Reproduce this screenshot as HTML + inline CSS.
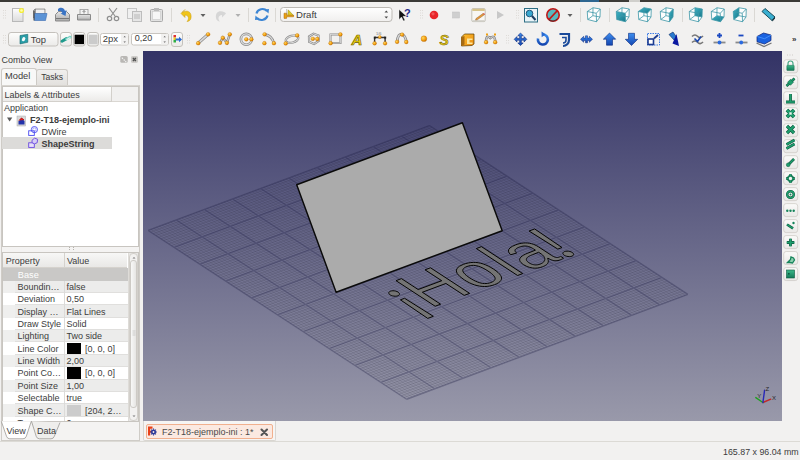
<!DOCTYPE html>
<html><head><meta charset="utf-8">
<style>
*{box-sizing:border-box}
html,body{margin:0;padding:0}
body{width:800px;height:460px;position:relative;overflow:hidden;background:#f2f1f0;font-family:"Liberation Sans",sans-serif;font-size:9px;color:#3c3c3c}
.a{position:absolute}
.t{position:absolute;white-space:nowrap;line-height:1}
.sep{position:absolute;width:1px;background:#d8d6d3;top:8px;height:14px}
.hdl{position:absolute;width:2px;height:10px;border-left:1px dotted #c0bdb9;border-right:1px dotted #c0bdb9}
.btn{position:absolute;border:1px solid #c9c6c1;border-radius:3px;background:linear-gradient(#fbfbfa,#ecebe9)}
.ic{position:absolute}
</style></head><body>
<div class="a" style="left:0;top:0;width:800px;height:2px;background:#3c3b37"></div>
<div class="a" style="left:580px;top:0;width:19px;height:1.5px;background:#2e6690"></div>
<div class="a" style="left:629px;top:0;width:11px;height:2px;background:#d0cfcc"></div>

<!-- TOOLBAR ROW 1 -->
<div id="tb1">
<svg class="a" style="left:0;top:0" width="800" height="52" viewBox="0 0 800 52">
<defs><linearGradient id="pg" x1="0" y1="0" x2="0" y2="1"><stop offset="0" stop-color="#fdfdfd"/><stop offset="1" stop-color="#dcdcdc"/></linearGradient><linearGradient id="teal" x1="0" y1="0" x2="1" y2="1"><stop offset="0" stop-color="#3fb2c6"/><stop offset="1" stop-color="#17788a"/></linearGradient><linearGradient id="blu" x1="0" y1="0" x2="0" y2="1"><stop offset="0" stop-color="#7fb0e8"/><stop offset="1" stop-color="#3a78c8"/></linearGradient><linearGradient id="gry" x1="0" y1="0" x2="0" y2="1"><stop offset="0" stop-color="#e8e8e8"/><stop offset="1" stop-color="#a8a8a8"/></linearGradient><linearGradient id="combo" x1="0" y1="0" x2="0" y2="1"><stop offset="0" stop-color="#ffffff"/><stop offset="1" stop-color="#f0efee"/></linearGradient></defs>
<rect x="3" y="10" width="1" height="1" fill="#dedbd7"/>
<rect x="5" y="10" width="1" height="1" fill="#dedbd7"/>
<rect x="3" y="12.5" width="1" height="1" fill="#dedbd7"/>
<rect x="5" y="12.5" width="1" height="1" fill="#dedbd7"/>
<rect x="3" y="15" width="1" height="1" fill="#dedbd7"/>
<rect x="5" y="15" width="1" height="1" fill="#dedbd7"/>
<rect x="3" y="17.5" width="1" height="1" fill="#dedbd7"/>
<rect x="5" y="17.5" width="1" height="1" fill="#dedbd7"/>
<rect x="12.5" y="8.5" width="10.5" height="13" fill="url(#pg)" stroke="#b8b8b8" stroke-width="1"/>
<circle cx="21.5" cy="10.5" r="2.6" fill="#f4ee3a"/><circle cx="21.5" cy="10.5" r="1.3" fill="#fffcb0"/>
<path d="M33.5 10.5l1.5-1.5h10v9h-11.5z" fill="#9a9a9a" stroke="#6a6a6a" stroke-width="0.6"/><rect x="36" y="9.5" width="8.5" height="4" fill="#f0f0f0"/>
<path d="M34.5 13.5h12.5l-1.5 7h-11z" fill="#5b93d6" stroke="#3a6cb0" stroke-width="0.6"/><path d="M34 11v9.5" stroke="#444" stroke-width="1"/>
<path d="M55.5 14.5l3-3h8l3 3v6.5h-14z" fill="url(#gry)" stroke="#8a8a8a" stroke-width="1"/>
<rect x="56" y="18" width="13" height="1" fill="#777"/>
<path d="M58 9c2-2 6-2 7 2l1.5-1-1 6-5-2.5 1.8-.6c-.6-1.8-2.8-2.4-4.3-1.4z" fill="#3a74c4"/>
<rect x="80" y="9.5" width="8" height="6" fill="#f4f4f4" stroke="#999" stroke-width="0.8"/>
<path d="M77.5 14.5h13v5.5h-13z" fill="url(#gry)" stroke="#8a8a8a" stroke-width="1"/>
<rect x="79" y="16.5" width="10" height="1" fill="#cfcfcf"/><path d="M84 10.5v3m-1.5-1.5l1.5-1.5 1.5 1.5" stroke="#777" stroke-width="0.8" fill="none"/>
<rect x="98" y="8" width="1" height="14" fill="#dad8d4"/>
<g stroke="#8f8f8f" fill="none" stroke-width="1.2"><path d="M109 8l6 8M117 8l-6 8"/><circle cx="109.5" cy="18.5" r="2.2"/><circle cx="116.5" cy="18.5" r="2.2"/></g>
<rect x="127.5" y="8.5" width="9" height="10" fill="#f0f0f0" stroke="#c6c6c6"/><rect x="132.5" y="11.5" width="9" height="10" fill="#e6e6e6" stroke="#bdbdbd"/><rect x="134" y="14" width="6" height="5" fill="#cfcfcf"/>
<rect x="150.5" y="9.5" width="12" height="12" rx="1" fill="#e2e2e2" stroke="#aaa"/><rect x="152.5" y="11.5" width="8" height="8" fill="#f6f6f6" stroke="#c8c8c8" stroke-width="0.6"/><rect x="154" y="8" width="5" height="3" fill="#bbb"/>
<rect x="171" y="8" width="1" height="14" fill="#dad8d4"/>
<path d="M182 12.5c5-3 10-1 9 5.5-0.3 2-2 3.5-4 3.5 2-2 2.5-6-2-6.5v2.5l-4-4 4-4z" fill="#f0c419" stroke="#c89a10" stroke-width="0.5"/>
<path d="M200.5 14h5l-2.5 3z" fill="#606060"/>
<path d="M225 12.5c-5-3-10-1-9 5.5 0.3 2 2 3.5 4 3.5-2-2-2.5-6 2-6.5v2.5l4-4-4-4z" fill="#d6d6d6"/>
<path d="M235.5 14h5l-2.5 3z" fill="#b0b0b0"/>
<rect x="248" y="8" width="1" height="14" fill="#dad8d4"/>
<g fill="none" stroke="#3d86d4" stroke-width="2.2"><path d="M256.5 13.5a6 5.5 0 0 1 10.5-2.5"/><path d="M267.5 15.5a6 5.5 0 0 1-10.5 2.5"/></g>
<path d="M264.5 9.5l4.5-0.5-0.5 4.5z M259.5 19.5l-4.5 0.5 0.5-4.5z" fill="#3d86d4"/>
<rect x="275" y="8" width="1" height="14" fill="#dad8d4"/>
<rect x="280.5" y="7.5" width="111.5" height="14" rx="3" fill="url(#combo)" stroke="#bdbab5"/>
<rect x="286.2" y="9" width="0.9" height="8.5" fill="#c0c0c0"/><path d="M288.2 9.8L293.6 15.6H287.8z" fill="#dcc828" stroke="#9a8a10" stroke-width="0.5"/><path d="M284 13.2h2.6v2h7v1.6h-7v1.6h-2.6z" fill="#eaa012" stroke="#a86a08" stroke-width="0.5"/>
<path d="M384.5 12.5l1.8-2 1.8 2zM384.5 16.5l1.8 2 1.8-2z" fill="#4c4c4c"/>
<path d="M399 9.5v10l2.5-2.5 2 4 1.5-0.7-2-4h3.5z" fill="#111" stroke="#fff" stroke-width="0.4"/>
<text x="404" y="17" font-family="Liberation Sans" font-weight="bold" font-size="11" fill="#1e2a88">?</text>
<rect x="420" y="10" width="1" height="1" fill="#dedbd7"/>
<rect x="422" y="10" width="1" height="1" fill="#dedbd7"/>
<rect x="420" y="12.5" width="1" height="1" fill="#dedbd7"/>
<rect x="422" y="12.5" width="1" height="1" fill="#dedbd7"/>
<rect x="420" y="15" width="1" height="1" fill="#dedbd7"/>
<rect x="422" y="15" width="1" height="1" fill="#dedbd7"/>
<rect x="420" y="17.5" width="1" height="1" fill="#dedbd7"/>
<rect x="422" y="17.5" width="1" height="1" fill="#dedbd7"/>
<circle cx="434" cy="15" r="4.3" fill="#e8262a"/><circle cx="433" cy="13.8" r="1.6" fill="#f46a6a" opacity="0.7"/>
<rect x="452.5" y="12" width="7" height="6" fill="#cfcfcf" stroke="#c0c0c0" stroke-width="0.5"/>
<rect x="471.8" y="8.6" width="13.4" height="13" rx="1.2" fill="#f8f7f3" stroke="#b8b4aa" stroke-width="0.8"/><rect x="472.3" y="8.8" width="12.4" height="2.2" fill="#d6c48a"/><rect x="472.3" y="20" width="12.4" height="1.4" fill="#d8d6d0"/><path d="M476 18.5l7-5 1.3 1.3-7 5-1.8.3z" fill="#e89a3a" stroke="#7a5020" stroke-width="0.4"/><path d="M483 13.5l1.3 1.3 .8-.6-1.3-1.3z" fill="#d83a3a"/>
<path d="M497 11v8l7-4z" fill="#c8c8c8"/>
<rect x="516" y="10" width="1" height="1" fill="#dedbd7"/>
<rect x="518" y="10" width="1" height="1" fill="#dedbd7"/>
<rect x="516" y="12.5" width="1" height="1" fill="#dedbd7"/>
<rect x="518" y="12.5" width="1" height="1" fill="#dedbd7"/>
<rect x="516" y="15" width="1" height="1" fill="#dedbd7"/>
<rect x="518" y="15" width="1" height="1" fill="#dedbd7"/>
<rect x="516" y="17.5" width="1" height="1" fill="#dedbd7"/>
<rect x="518" y="17.5" width="1" height="1" fill="#dedbd7"/>
<rect x="524.5" y="8.5" width="13" height="13.5" fill="#eaf4f8" stroke="#2c6e84" stroke-width="1"/><circle cx="529.5" cy="13.5" r="3.3" fill="#39a8d0" stroke="#1c4c70" stroke-width="0.9"/><path d="M532 16l3.5 4" stroke="#1c3d60" stroke-width="2"/>
<circle cx="553" cy="15" r="6.2" fill="#58b8c0" stroke="#c01818" stroke-width="1.6"/><path d="M549 19.5l8.5-9" stroke="#c01818" stroke-width="1.8"/><path d="M549 20a6 6 0 0 0 8 -1" stroke="#333" stroke-width="0.8" fill="none"/>
<path d="M567.5 14h5l-2.5 3z" fill="#606060"/>
<rect x="580" y="8" width="1" height="14" fill="#dad8d4"/>
<g transform="translate(587,7.5)">
<path d="M0.25 4L6 0.25L13.25 1.5L13 9.5L9.5 14.25L0.75 12z" fill="#ffffff" fill-opacity="0.85"/>
<path d="M0.25 4L9.25 5.75M9.25 5.75L9.5 14.25M9.5 14.25L0.75 12M0.75 12L0.25 4M6 0.25L13.25 1.5M13.25 1.5L13 9.5M13 9.5L5.9 8.2M5.9 8.2L6 0.25M0.25 4L6 0.25M9.25 5.75L13.25 1.5M9.5 14.25L13 9.5M0.75 12L5.9 8.2" fill="none" stroke="#3f98a8" stroke-width="0.9" stroke-opacity="0.9"/>
</g>
<rect x="609" y="8" width="1" height="14" fill="#dad8d4"/>
<g transform="translate(616,7.5)">
<path d="M0.25 4L6 0.25L13.25 1.5L13 9.5L9.5 14.25L0.75 12z" fill="#ffffff" fill-opacity="0.85"/>
<path d="M0.25 4L9.25 5.75L9.5 14.25L0.75 12z" fill="url(#teal)"/>
<path d="M0.25 4L9.25 5.75M9.25 5.75L9.5 14.25M9.5 14.25L0.75 12M0.75 12L0.25 4M6 0.25L13.25 1.5M13.25 1.5L13 9.5M13 9.5L5.9 8.2M5.9 8.2L6 0.25M0.25 4L6 0.25M9.25 5.75L13.25 1.5M9.5 14.25L13 9.5M0.75 12L5.9 8.2" fill="none" stroke="#3f98a8" stroke-width="0.9" stroke-opacity="0.9"/>
</g>
<g transform="translate(638,7.5)">
<path d="M0.25 4L6 0.25L13.25 1.5L13 9.5L9.5 14.25L0.75 12z" fill="#ffffff" fill-opacity="0.85"/>
<path d="M0.25 4L6 0.25L13.25 1.5L9.25 5.75z" fill="url(#teal)"/>
<path d="M0.25 4L9.25 5.75M9.25 5.75L9.5 14.25M9.5 14.25L0.75 12M0.75 12L0.25 4M6 0.25L13.25 1.5M13.25 1.5L13 9.5M13 9.5L5.9 8.2M5.9 8.2L6 0.25M0.25 4L6 0.25M9.25 5.75L13.25 1.5M9.5 14.25L13 9.5M0.75 12L5.9 8.2" fill="none" stroke="#3f98a8" stroke-width="0.9" stroke-opacity="0.9"/>
</g>
<g transform="translate(660,7.5)">
<path d="M0.25 4L6 0.25L13.25 1.5L13 9.5L9.5 14.25L0.75 12z" fill="#ffffff" fill-opacity="0.85"/>
<path d="M9.25 5.75L13.25 1.5L13 9.5L9.5 14.25z" fill="url(#teal)"/>
<path d="M0.25 4L9.25 5.75M9.25 5.75L9.5 14.25M9.5 14.25L0.75 12M0.75 12L0.25 4M6 0.25L13.25 1.5M13.25 1.5L13 9.5M13 9.5L5.9 8.2M5.9 8.2L6 0.25M0.25 4L6 0.25M9.25 5.75L13.25 1.5M9.5 14.25L13 9.5M0.75 12L5.9 8.2" fill="none" stroke="#3f98a8" stroke-width="0.9" stroke-opacity="0.9"/>
</g>
<rect x="682" y="8" width="1" height="14" fill="#dad8d4"/>
<g transform="translate(689,7.5)">
<path d="M0.25 4L6 0.25L13.25 1.5L13 9.5L9.5 14.25L0.75 12z" fill="#ffffff" fill-opacity="0.85"/>
<path d="M6 0.25L13.25 1.5L13 9.5L5.9 8.2z" fill="url(#teal)"/>
<path d="M0.25 4L9.25 5.75M9.25 5.75L9.5 14.25M9.5 14.25L0.75 12M0.75 12L0.25 4M6 0.25L13.25 1.5M13.25 1.5L13 9.5M13 9.5L5.9 8.2M5.9 8.2L6 0.25M0.25 4L6 0.25M9.25 5.75L13.25 1.5M9.5 14.25L13 9.5M0.75 12L5.9 8.2" fill="none" stroke="#3f98a8" stroke-width="0.9" stroke-opacity="0.9"/>
</g>
<g transform="translate(711,7.5)">
<path d="M0.25 4L6 0.25L13.25 1.5L13 9.5L9.5 14.25L0.75 12z" fill="#ffffff" fill-opacity="0.85"/>
<path d="M0.75 12L5.9 8.2L13 9.5L9.5 14.25z" fill="url(#teal)"/>
<path d="M0.25 4L9.25 5.75M9.25 5.75L9.5 14.25M9.5 14.25L0.75 12M0.75 12L0.25 4M6 0.25L13.25 1.5M13.25 1.5L13 9.5M13 9.5L5.9 8.2M5.9 8.2L6 0.25M0.25 4L6 0.25M9.25 5.75L13.25 1.5M9.5 14.25L13 9.5M0.75 12L5.9 8.2" fill="none" stroke="#3f98a8" stroke-width="0.9" stroke-opacity="0.9"/>
</g>
<g transform="translate(733,7.5)">
<path d="M0.25 4L6 0.25L13.25 1.5L13 9.5L9.5 14.25L0.75 12z" fill="#ffffff" fill-opacity="0.85"/>
<path d="M0.25 4L6 0.25L5.9 8.2L0.75 12z" fill="url(#teal)"/>
<path d="M0.25 4L9.25 5.75M9.25 5.75L9.5 14.25M9.5 14.25L0.75 12M0.75 12L0.25 4M6 0.25L13.25 1.5M13.25 1.5L13 9.5M13 9.5L5.9 8.2M5.9 8.2L6 0.25M0.25 4L6 0.25M9.25 5.75L13.25 1.5M9.5 14.25L13 9.5M0.75 12L5.9 8.2" fill="none" stroke="#3f98a8" stroke-width="0.9" stroke-opacity="0.9"/>
</g>
<rect x="754" y="8" width="1" height="14" fill="#dad8d4"/>
<path d="M762 11.5l3-3 10 8.5-3 3.5z" fill="#3aaed0" stroke="#1a4c5a" stroke-width="1"/><path d="M772 20l3-3.5v2l-2.5 3z" fill="#1e3a44"/>
</svg>
</div>
<!-- TOOLBAR ROW 2 -->
<div id="tb2">
<svg class="a" style="left:0;top:27px" width="800" height="24" viewBox="0 27 800 24">
<defs><linearGradient id="bt" x1="0" y1="0" x2="0" y2="1"><stop offset="0" stop-color="#fdfdfc"/><stop offset="1" stop-color="#ebeae8"/></linearGradient><radialGradient id="dot" cx="0.35" cy="0.35" r="0.7"><stop offset="0" stop-color="#ffd860"/><stop offset="0.6" stop-color="#f4a010"/><stop offset="1" stop-color="#c87000"/></radialGradient><linearGradient id="bl" x1="0" y1="0" x2="0" y2="1"><stop offset="0" stop-color="#3d8ef0"/><stop offset="1" stop-color="#1446b0"/></linearGradient><linearGradient id="yl" x1="0" y1="0" x2="1" y2="1"><stop offset="0" stop-color="#ffc030"/><stop offset="1" stop-color="#e88a10"/></linearGradient></defs>
<rect x="3" y="35" width="1" height="1" fill="#dedbd7"/>
<rect x="5" y="35" width="1" height="1" fill="#dedbd7"/>
<rect x="3" y="37.5" width="1" height="1" fill="#dedbd7"/>
<rect x="5" y="37.5" width="1" height="1" fill="#dedbd7"/>
<rect x="3" y="40" width="1" height="1" fill="#dedbd7"/>
<rect x="5" y="40" width="1" height="1" fill="#dedbd7"/>
<rect x="3" y="42.5" width="1" height="1" fill="#dedbd7"/>
<rect x="5" y="42.5" width="1" height="1" fill="#dedbd7"/>
<rect x="8.5" y="32.5" width="49.5" height="13.5" rx="2.5" fill="url(#bt)" stroke="#c4c1bc"/>
<path d="M20 35.5l7.8-1.2v8l-7.8 1.6z" fill="#2a9ea8" stroke="#1a6a70" stroke-width="0.6"/><ellipse cx="23.6" cy="39.2" rx="1.6" ry="2.2" transform="rotate(30 23.6 39.2)" fill="#f4fbfb"/>
<rect x="60.5" y="32.5" width="11" height="13.5" rx="2.5" fill="url(#bt)" stroke="#c4c1bc"/>
<path d="M62 41.2l4.5-2.6" stroke="#1f9a8c" stroke-width="3" stroke-linecap="round"/><path d="M66.5 39.2l3.8-2.2" stroke="#7ad0c4" stroke-width="2.6" stroke-linecap="round"/><path d="M67 39.5l3-1.8" stroke="#dff6f2" stroke-width="1.2" stroke-linecap="round"/>
<rect x="73.5" y="32.5" width="11.5" height="13.5" rx="2.5" fill="url(#bt)" stroke="#c4c1bc"/><rect x="74.6" y="34.7" width="9.4" height="9.4" fill="#000"/>
<rect x="87.5" y="32.5" width="11" height="13.5" rx="2.5" fill="url(#bt)" stroke="#c4c1bc"/><rect x="88.6" y="34.7" width="9" height="9.4" fill="#cbcbcb"/>
<rect x="100.5" y="33.5" width="28" height="11.5" rx="2" fill="#fff" stroke="#c8c5c0"/>
<rect x="121" y="34" width="7" height="10.5" fill="#f2f1f0"/>
<path d="M123.5 37.3l1.2-1.3 1.2 1.3z M123.5 41.5l1.2 1.3 1.2-1.3z" fill="#5a5a5a"/>
<rect x="131.5" y="33.5" width="37" height="11.5" rx="2" fill="#fff" stroke="#c8c5c0"/>
<rect x="161" y="34" width="7" height="10.5" fill="#f2f1f0"/>
<path d="M163.5 37.3l1.2-1.3 1.2 1.3z M163.5 41.5l1.2 1.3 1.2-1.3z" fill="#5a5a5a"/>
<rect x="171.5" y="32.5" width="11" height="14" rx="2.5" fill="url(#bt)" stroke="#c4c1bc"/>
<rect x="173.5" y="35" width="2.5" height="2.5" fill="#e03030"/><rect x="173.5" y="37.5" width="2.5" height="2.5" fill="#f0d020"/><rect x="173.5" y="40" width="2.5" height="2.5" fill="#30b040"/>
<path d="M175.5 38.5h3.5v-1.8l3 2.8-3 2.8v-1.8h-3.5z" fill="#2a6ad0"/>
<rect x="187" y="35" width="1" height="1" fill="#dedbd7"/>
<rect x="189" y="35" width="1" height="1" fill="#dedbd7"/>
<rect x="187" y="37.5" width="1" height="1" fill="#dedbd7"/>
<rect x="189" y="37.5" width="1" height="1" fill="#dedbd7"/>
<rect x="187" y="40" width="1" height="1" fill="#dedbd7"/>
<rect x="189" y="40" width="1" height="1" fill="#dedbd7"/>
<rect x="187" y="42.5" width="1" height="1" fill="#dedbd7"/>
<rect x="189" y="42.5" width="1" height="1" fill="#dedbd7"/>
<path d="M198.2 43.2L208.1 34.3" fill="none" stroke="#8a8a8a" stroke-width="3.1"/><path d="M198.2 43.2L208.1 34.3" fill="none" stroke="#d8d8d8" stroke-width="1.6"/>
<circle cx="198.2" cy="43.2" r="1.9" fill="url(#dot)" stroke="#b86a00" stroke-width="0.3"/>
<circle cx="208.1" cy="34.3" r="1.9" fill="url(#dot)" stroke="#b86a00" stroke-width="0.3"/>
<path d="M220 42.8L222.8 37.8L226.9 42.8L229.8 34.3" fill="none" stroke="#8a8a8a" stroke-width="2.5"/><path d="M220 42.8L222.8 37.8L226.9 42.8L229.8 34.3" fill="none" stroke="#d8d8d8" stroke-width="1"/>
<circle cx="220" cy="42.8" r="1.9" fill="url(#dot)" stroke="#b86a00" stroke-width="0.3"/>
<circle cx="222.8" cy="37.8" r="1.9" fill="url(#dot)" stroke="#b86a00" stroke-width="0.3"/>
<circle cx="226.9" cy="42.8" r="1.9" fill="url(#dot)" stroke="#b86a00" stroke-width="0.3"/>
<circle cx="229.8" cy="34.3" r="1.9" fill="url(#dot)" stroke="#b86a00" stroke-width="0.3"/>
<circle cx="246.3" cy="39.3" r="5.4" fill="none" stroke="#8a8a8a" stroke-width="2.6"/><circle cx="246.3" cy="39.3" r="5.4" fill="none" stroke="#dcdcdc" stroke-width="1.2"/>
<circle cx="246.3" cy="39.3" r="1.9" fill="url(#dot)" stroke="#b86a00" stroke-width="0.3"/>
<circle cx="251.4" cy="39.3" r="1.9" fill="url(#dot)" stroke="#b86a00" stroke-width="0.3"/>
<path d="M264.6 34.3Q272 35.5 273.9 43.2" fill="none" stroke="#8a8a8a" stroke-width="2.7"/><path d="M264.6 34.3Q272 35.5 273.9 43.2" fill="none" stroke="#d8d8d8" stroke-width="1.2"/>
<circle cx="264.6" cy="34.3" r="1.9" fill="url(#dot)" stroke="#b86a00" stroke-width="0.3"/>
<circle cx="264.4" cy="43.2" r="1.9" fill="url(#dot)" stroke="#b86a00" stroke-width="0.3"/>
<circle cx="273.9" cy="43.2" r="1.9" fill="url(#dot)" stroke="#b86a00" stroke-width="0.3"/>
<ellipse cx="292" cy="39.2" rx="6.5" ry="3.4" transform="rotate(-15 292 39.2)" fill="none" stroke="#8a8a8a" stroke-width="2.2"/><ellipse cx="292" cy="39.2" rx="6.5" ry="3.4" transform="rotate(-15 292 39.2)" fill="none" stroke="#dcdcdc" stroke-width="1"/>
<circle cx="285.7" cy="43.4" r="1.9" fill="url(#dot)" stroke="#b86a00" stroke-width="0.3"/>
<circle cx="297.2" cy="35.4" r="1.9" fill="url(#dot)" stroke="#b86a00" stroke-width="0.3"/>
<path d="M309 36.5l4.5-2.8 5 1.8.2 5.5-4.6 3-5 -2.2z" fill="none" stroke="#8a8a8a" stroke-width="2.2"/><path d="M309 36.5l4.5-2.8 5 1.8.2 5.5-4.6 3-5 -2.2z" fill="none" stroke="#dcdcdc" stroke-width="1"/>
<circle cx="312.8" cy="38.8" r="1.9" fill="url(#dot)" stroke="#b86a00" stroke-width="0.3"/>
<circle cx="317.3" cy="39" r="1.9" fill="url(#dot)" stroke="#b86a00" stroke-width="0.3"/>
<rect x="330.5" y="34.5" width="10" height="8.5" fill="none" stroke="#8a8a8a" stroke-width="2"/><rect x="330.5" y="34.5" width="10" height="8.5" fill="none" stroke="#dcdcdc" stroke-width="0.8"/>
<circle cx="330.6" cy="43.2" r="1.9" fill="url(#dot)" stroke="#b86a00" stroke-width="0.3"/>
<circle cx="340.4" cy="34.4" r="1.9" fill="url(#dot)" stroke="#b86a00" stroke-width="0.3"/>
<text x="351.5" y="45" font-family="Liberation Sans" font-weight="bold" font-style="italic" font-size="15" fill="#f2d20a" stroke="#6a5a00" stroke-width="0.6">A</text>
<path d="M374.6 37.5h10.5M374.6 37.5v5.8M385.1 37.5v5.8" stroke="#333" stroke-width="1.4" fill="none"/><text x="376" y="35" font-size="4" fill="#777" font-family="Liberation Sans">1/6</text>
<circle cx="374.6" cy="43.3" r="1.9" fill="url(#dot)" stroke="#b86a00" stroke-width="0.3"/>
<circle cx="385.1" cy="43.3" r="1.9" fill="url(#dot)" stroke="#b86a00" stroke-width="0.3"/>
<circle cx="379.8" cy="37.1" r="1.6" fill="url(#dot)" stroke="#b86a00" stroke-width="0.3"/>
<rect x="373.8" y="36.6" width="2" height="2" fill="#222"/><rect x="384.2" y="36.6" width="2" height="2" fill="#222"/>
<path d="M397.1 41.8Q398 33 402 34.5Q405.5 35.5 406.3 42" fill="none" stroke="#8a8a8a" stroke-width="2.7"/><path d="M397.1 41.8Q398 33 402 34.5Q405.5 35.5 406.3 42" fill="none" stroke="#d8d8d8" stroke-width="1.2"/>
<circle cx="397.1" cy="41.8" r="1.9" fill="url(#dot)" stroke="#b86a00" stroke-width="0.3"/>
<circle cx="402.1" cy="34.6" r="1.9" fill="url(#dot)" stroke="#b86a00" stroke-width="0.3"/>
<circle cx="406.3" cy="42" r="1.9" fill="url(#dot)" stroke="#b86a00" stroke-width="0.3"/>
<circle cx="423.9" cy="38.7" r="2.9" fill="url(#dot)" stroke="#b86a00" stroke-width="0.3"/>
<text x="439.5" y="45" font-family="Liberation Sans" font-weight="bold" font-style="italic" font-size="14" fill="#e8c818" stroke="#6a5a00" stroke-width="0.5">S</text>
<path d="M461.5 37l3-3h9.5v10l-2 1.5-10.5 .5z" fill="url(#yl)" stroke="#5a3a00" stroke-width="0.7"/><path d="M467 38.5h5.5v1.5h-3v2.5h3v1.5h-5.5z" fill="#fbe6a0"/><path d="M461.5 37v9l3-1.5v-8.5z" fill="#a86a10"/>
<path d="M486 42Q486 34 490.3 38Q495 34 495.2 42" fill="none" stroke="#8a8a8a" stroke-width="2.5"/><path d="M486 42Q486 34 490.3 38Q495 34 495.2 42" fill="none" stroke="#d8d8d8" stroke-width="1"/>
<circle cx="486.1" cy="42.2" r="1.9" fill="url(#dot)" stroke="#b86a00" stroke-width="0.3"/>
<circle cx="495.2" cy="42.2" r="1.9" fill="url(#dot)" stroke="#b86a00" stroke-width="0.3"/>
<rect x="486" y="33.5" width="2" height="2" fill="#f0a010"/><rect x="494" y="33.5" width="2" height="2" fill="#f0a010"/>
<rect x="506" y="35" width="1" height="1" fill="#dedbd7"/>
<rect x="508" y="35" width="1" height="1" fill="#dedbd7"/>
<rect x="506" y="37.5" width="1" height="1" fill="#dedbd7"/>
<rect x="508" y="37.5" width="1" height="1" fill="#dedbd7"/>
<rect x="506" y="40" width="1" height="1" fill="#dedbd7"/>
<rect x="508" y="40" width="1" height="1" fill="#dedbd7"/>
<rect x="506" y="42.5" width="1" height="1" fill="#dedbd7"/>
<rect x="508" y="42.5" width="1" height="1" fill="#dedbd7"/>
<path d="M520.50 33.00L523.20 35.70L521.35 35.70L521.35 38.45L524.10 38.45L524.10 36.60L526.80 39.30L524.10 42.00L524.10 40.15L521.35 40.15L521.35 42.90L523.20 42.90L520.50 45.60L517.80 42.90L519.65 42.90L519.65 40.15L516.90 40.15L516.90 42.00L514.20 39.30L516.90 36.60L516.90 38.45L519.65 38.45L519.65 35.70L517.80 35.70z" fill="url(#bl)" stroke="#0c2a80" stroke-width="0.6"/>
<path d="M538 38.5a5 5 0 1 0 5-4" fill="none" stroke="url(#bl)" stroke-width="2.6"/><path d="M541.5 31.5l4 2.8-3.8 3z" fill="#2a6ad0"/>
<path d="M559.5 34h9.5v6a6 6 0 0 1-6 6" fill="none" stroke="#1a4a9a" stroke-width="2.2"/><path d="M562 37.5h4v2.5a3 3 0 0 1-3 3" fill="none" stroke="#1a4a9a" stroke-width="1.6"/>
<path d="M580.5 39.3l3.2-3v1.8h1.8v-2.3h2v2.3h1.8v-1.8l3.2 3-3.2 3v-1.8h-1.8v2.3h-2v-2.3h-1.8v1.8z" fill="url(#bl)" stroke="#0c2a80" stroke-width="0.5"/>
<path d="M609.5 33l6.2 6.2h-3.2v6h-6v-6h-3.2z" fill="url(#bl)" stroke="#0a2a80" stroke-width="0.6"/>
<path d="M631.5 45.5l6.2-6.2h-3.2v-6h-6v6h-3.2z" fill="url(#bl)" stroke="#0a2a80" stroke-width="0.6"/>
<rect x="647.5" y="33.5" width="12" height="11.5" fill="none" stroke="#3a7ae8" stroke-width="1" stroke-dasharray="1.5 1"/><rect x="648" y="39" width="5.5" height="5.5" fill="#fff" stroke="#1a3a90" stroke-width="1.6"/><path d="M654 38.5l4-3.5" stroke="#1a3a90" stroke-width="1.8"/>
<path d="M669 34.5l4-2.5 3.5 5-2.5 3z" fill="#2a7ad0" stroke="#0a2a60" stroke-width="0.6"/><path d="M676.5 34l-4 9.5 6.5 2.5z" fill="#0a18a0"/>
<path d="M692 36.5q3-3 5.5-.2t5.5-.3 M692 42.5q3-3 5.5-.2t5.5-.3" fill="none" stroke="#777" stroke-width="1.6"/><path d="M694.5 38.5l3 3 3.5-5" fill="none" stroke="#1a48b0" stroke-width="1.6"/>
<path d="M713.5 42.5h12" stroke="#8a8a8a" stroke-width="1.8"/><circle cx="719.5" cy="42.5" r="1.9" fill="#2a6ae0"/><path d="M717 35.5h5M719.5 33v5" stroke="#1a48c0" stroke-width="1.8"/>
<path d="M735.5 42.5h12" stroke="#8a8a8a" stroke-width="1.8"/><circle cx="741.2" cy="42.5" r="1.9" fill="#2a6ae0"/><path d="M738.5 35.5h5" stroke="#1a48c0" stroke-width="1.8"/>
<path d="M756.5 43l7.5 3.5 7.5-3.5" fill="none" stroke="#777" stroke-width="1.3"/><path d="M757 36.5l6.5-3.5 7.5 2v5.5l-6.5 3.5-7.5-2.2z" fill="#1a62e0" stroke="#0a1e70" stroke-width="0.7"/><path d="M757 36.5l7.5 2.2 6.5-3.5" fill="none" stroke="#4a98ff" stroke-width="0.8"/>
<text x="792" y="41.5" font-family="Liberation Sans" font-weight="bold" font-size="8" fill="#333">»</text>
</svg>
<div class="t" style="left:30.8px;top:34.6px;font-size:9.4px;color:#3c3c3c">Top</div>
<div class="t" style="left:102.7px;top:34.1px;font-size:9.5px;color:#3c3c3c">2px</div>
<div class="t" style="left:134.7px;top:34.1px;font-size:9px;color:#3c3c3c">0,20</div>
<div class="t" style="left:296px;top:9.9px;font-size:9.6px;color:#3c3c3c">Draft</div>
</div>

<!-- COMBO VIEW -->
<div class="t" style="left:1.5px;top:56px">Combo View</div>
<svg class="a" style="left:119px;top:55px" width="20" height="9" viewBox="119 55 20 9">
<rect x="120.3" y="56" width="7.4" height="6.8" rx="1.5" fill="#b9b7b4"/>
<rect x="131.1" y="56" width="6.7" height="6.8" rx="1.5" fill="#bdbbb8"/>
<path d="M121.8 57.6l1.2 1.2M123.7 59.5l1 1M125.3 61.1l.9.9" stroke="#f4f4f4" stroke-width="1.1"/>
<rect x="131.9" y="56.8" width="5.1" height="5.2" fill="none" stroke="#dddbd8" stroke-width="0.6"/>
<path d="M132.9 58l3 3M135.9 58l-3 3" stroke="#505050" stroke-width="1.2"/>
</svg>
<!-- tabs -->
<div class="a" style="left:36px;top:69px;width:32px;height:17px;border:1px solid #cdcac5;border-bottom:none;border-radius:3px 3px 0 0;background:linear-gradient(#f0efed,#e2e0dd)"></div>
<div class="a" style="left:1px;top:67.5px;width:36px;height:19px;border:1px solid #cdcac5;border-bottom:none;border-radius:3px 3px 0 0;background:#f8f8f7"></div>
<div class="t" style="left:5px;top:72.3px;font-size:9.3px">Model</div>
<div class="t" style="left:41.2px;top:73px;font-size:8.6px">Tasks</div>
<!-- tab pane frame -->
<div class="a" style="left:1px;top:85px;width:139px;height:356px;border:1px solid #cfccc7;border-top-color:#d8d5d0;background:#f4f3f2"></div>
<!-- tree view -->
<div class="a" style="left:2px;top:86px;width:137px;height:161px;border:1px solid #c8c5c0;background:#fff"></div>
<div class="a" style="left:3px;top:87px;width:108.5px;height:14.5px;background:linear-gradient(#ffffff,#ecebe9);border-right:1px solid #d3d0cb;border-bottom:1px solid #d3d0cb"></div>
<div class="a" style="left:111.5px;top:87px;width:26.5px;height:14.5px;background:#f1f0ef;border-bottom:1px solid #dad7d2"></div>
<div class="t" style="left:4.6px;top:90.5px">Labels &amp; Attributes</div>
<div class="t" style="left:4px;top:104px">Application</div>
<svg class="a" style="left:0;top:100px" width="140" height="52" viewBox="0 100 140 52">
<path d="M7 117.5h5.3l-2.65 4z" fill="#5a5a5a"/>
<rect x="17" y="116" width="8.5" height="10" fill="#d8d8d8" stroke="#aaa" stroke-width="0.5"/>
<path d="M18.5 121.5l3-3 3 2.5v3.5h-6z" fill="#2233aa"/><path d="M19 120.5l2.5-2.5 2.5 2" fill="#dd2020" stroke="#bb1010" stroke-width="1"/>
</svg>
<div class="a" style="left:2px;top:137px;width:109.5px;height:12px;background:#dcdbd9"></div>
<svg class="a" style="left:26px;top:124px" width="14" height="26" viewBox="26 124 14 26">
<rect x="28.7" y="130.8" width="5.6" height="4.6" fill="#fff" stroke="#4848f0" stroke-width="0.9"/>
<circle cx="34.4" cy="129.6" r="3.1" fill="none" stroke="#4848f0" stroke-width="0.9"/>
<circle cx="34.4" cy="129.6" r="1.7" fill="none" stroke="#7a7af4" stroke-width="0.6"/>
<rect x="28.7" y="142.8" width="5.6" height="4.6" fill="#e6e0f8" stroke="#6a48e0" stroke-width="0.9"/>
<path d="M32 140.3l2.6-2.2 3 1.2-.4 3.4-2.8 1.2-2.4-1.4z" fill="#d6cdf6" stroke="#6a48e0" stroke-width="0.9"/>
</svg>
<div class="t" style="left:30px;top:116px;font-weight:bold">F2-T18-ejemplo-ini</div>
<div class="t" style="left:41.5px;top:128px">DWire</div>
<div class="t" style="left:41.5px;top:139.5px;font-weight:bold">ShapeString</div>
<!-- splitter dots -->
<div class="a" style="left:69px;top:247px;width:5px;height:3px;border-left:1px dotted #b5b2ad;border-right:1px dotted #b5b2ad"></div>
<!-- property view -->
<div class="a" style="left:2px;top:252px;width:137px;height:170px;border:1px solid #c8c5c0;background:#fff"></div>
<div class="a" style="left:3px;top:253px;width:124px;height:15px;background:linear-gradient(#f7f7f6,#e9e8e6);border-bottom:1px solid #d5d2cd"></div>
<div class="a" style="left:64px;top:253px;width:1px;height:15px;background:#d5d2cd"></div>
<div class="t" style="left:5.8px;top:257px">Property</div>
<div class="t" style="left:67px;top:257px">Value</div>
<div class="a" style="left:0;top:0;width:140px;height:421px;overflow:hidden">
<div class="a" style="left:3px;top:268px;width:125px;height:12.5px;background:#c9c8c6"></div>
<div class="t" style="left:17.8px;top:270.5px;color:#fff;font-size:9.2px">Base</div>
<div class="a" style="left:15px;top:280.50px;width:113px;height:12.39px;background:#ececeb;border-bottom:1px solid #e0dfdd"></div>
<div class="a" style="left:3px;top:280.50px;width:12px;height:12.39px;background:#efefee"></div>
<div class="a" style="left:64px;top:280.50px;width:1px;height:12.38px;background:#dcdbd9"></div>
<div class="t" style="left:17.5px;top:282.80px">Boundin…</div>
<div class="t" style="left:66.5px;top:282.80px">false</div>
<div class="a" style="left:15px;top:292.88px;width:113px;height:12.39px;background:#ffffff;border-bottom:1px solid #e0dfdd"></div>
<div class="a" style="left:3px;top:292.88px;width:12px;height:12.39px;background:#ffffff"></div>
<div class="a" style="left:64px;top:292.88px;width:1px;height:12.38px;background:#dcdbd9"></div>
<div class="t" style="left:17.5px;top:295.18px">Deviation</div>
<div class="t" style="left:66.5px;top:295.18px">0,50</div>
<div class="a" style="left:15px;top:305.26px;width:113px;height:12.39px;background:#ececeb;border-bottom:1px solid #e0dfdd"></div>
<div class="a" style="left:3px;top:305.26px;width:12px;height:12.39px;background:#efefee"></div>
<div class="a" style="left:64px;top:305.26px;width:1px;height:12.38px;background:#dcdbd9"></div>
<div class="t" style="left:17.5px;top:307.56px">Display …</div>
<div class="t" style="left:66.5px;top:307.56px">Flat Lines</div>
<div class="a" style="left:15px;top:317.64px;width:113px;height:12.39px;background:#ffffff;border-bottom:1px solid #e0dfdd"></div>
<div class="a" style="left:3px;top:317.64px;width:12px;height:12.39px;background:#ffffff"></div>
<div class="a" style="left:64px;top:317.64px;width:1px;height:12.38px;background:#dcdbd9"></div>
<div class="t" style="left:17.5px;top:319.94px">Draw Style</div>
<div class="t" style="left:66.5px;top:319.94px">Solid</div>
<div class="a" style="left:15px;top:330.02px;width:113px;height:12.39px;background:#ececeb;border-bottom:1px solid #e0dfdd"></div>
<div class="a" style="left:3px;top:330.02px;width:12px;height:12.39px;background:#efefee"></div>
<div class="a" style="left:64px;top:330.02px;width:1px;height:12.38px;background:#dcdbd9"></div>
<div class="t" style="left:17.5px;top:332.32px">Lighting</div>
<div class="t" style="left:66.5px;top:332.32px">Two side</div>
<div class="a" style="left:15px;top:342.40px;width:113px;height:12.39px;background:#ffffff;border-bottom:1px solid #e0dfdd"></div>
<div class="a" style="left:3px;top:342.40px;width:12px;height:12.39px;background:#ffffff"></div>
<div class="a" style="left:64px;top:342.40px;width:1px;height:12.38px;background:#dcdbd9"></div>
<div class="t" style="left:17.5px;top:344.70px">Line Color</div>
<div class="a" style="left:66.6px;top:342.70px;width:14.6px;height:11.8px;background:#000"></div>
<div class="t" style="left:85px;top:344.70px">[0, 0, 0]</div>
<div class="a" style="left:15px;top:354.78px;width:113px;height:12.39px;background:#ececeb;border-bottom:1px solid #e0dfdd"></div>
<div class="a" style="left:3px;top:354.78px;width:12px;height:12.39px;background:#efefee"></div>
<div class="a" style="left:64px;top:354.78px;width:1px;height:12.38px;background:#dcdbd9"></div>
<div class="t" style="left:17.5px;top:357.08px">Line Width</div>
<div class="t" style="left:66.5px;top:357.08px">2,00</div>
<div class="a" style="left:15px;top:367.16px;width:113px;height:12.39px;background:#ffffff;border-bottom:1px solid #e0dfdd"></div>
<div class="a" style="left:3px;top:367.16px;width:12px;height:12.39px;background:#ffffff"></div>
<div class="a" style="left:64px;top:367.16px;width:1px;height:12.38px;background:#dcdbd9"></div>
<div class="t" style="left:17.5px;top:369.46px">Point Co…</div>
<div class="a" style="left:66.6px;top:367.46px;width:14.6px;height:11.8px;background:#000"></div>
<div class="t" style="left:85px;top:369.46px">[0, 0, 0]</div>
<div class="a" style="left:15px;top:379.54px;width:113px;height:12.39px;background:#ececeb;border-bottom:1px solid #e0dfdd"></div>
<div class="a" style="left:3px;top:379.54px;width:12px;height:12.39px;background:#efefee"></div>
<div class="a" style="left:64px;top:379.54px;width:1px;height:12.38px;background:#dcdbd9"></div>
<div class="t" style="left:17.5px;top:381.84px">Point Size</div>
<div class="t" style="left:66.5px;top:381.84px">1,00</div>
<div class="a" style="left:15px;top:391.92px;width:113px;height:12.39px;background:#ffffff;border-bottom:1px solid #e0dfdd"></div>
<div class="a" style="left:3px;top:391.92px;width:12px;height:12.39px;background:#ffffff"></div>
<div class="a" style="left:64px;top:391.92px;width:1px;height:12.38px;background:#dcdbd9"></div>
<div class="t" style="left:17.5px;top:394.22px">Selectable</div>
<div class="t" style="left:66.5px;top:394.22px">true</div>
<div class="a" style="left:15px;top:404.30px;width:113px;height:12.39px;background:#ececeb;border-bottom:1px solid #e0dfdd"></div>
<div class="a" style="left:3px;top:404.30px;width:12px;height:12.39px;background:#efefee"></div>
<div class="a" style="left:64px;top:404.30px;width:1px;height:12.38px;background:#dcdbd9"></div>
<div class="t" style="left:17.5px;top:406.60px">Shape C…</div>
<div class="a" style="left:66.6px;top:404.60px;width:14.6px;height:11.8px;background:#cccccc"></div>
<div class="t" style="left:85px;top:406.60px">[204, 2…</div>
<div class="a" style="left:15px;top:416.68px;width:113px;height:12.39px;background:#ffffff;border-bottom:1px solid #e0dfdd"></div>
<div class="a" style="left:3px;top:416.68px;width:12px;height:12.39px;background:#ffffff"></div>
<div class="a" style="left:64px;top:416.68px;width:1px;height:12.38px;background:#dcdbd9"></div>
<div class="t" style="left:17.5px;top:418.98px">T…</div>
<div class="t" style="left:66.5px;top:418.98px">0</div>
</div>
<!-- scrollbar -->
<div class="a" style="left:128px;top:253px;width:10px;height:168px;background:#e9e8e6;border-left:1px solid #dedcd8"></div>
<div class="a" style="left:129px;top:253px;width:9px;height:168px;border-radius:4px;background:#f2f1f0;border:1px solid #d3d0cb"></div>
<div class="a" style="left:130px;top:260px;width:7px;height:148px;border-radius:3px;background:linear-gradient(90deg,#f8f8f7,#e6e5e3);border:1px solid #cdcac5"></div>
<svg class="a" style="left:129px;top:253px" width="10" height="168" viewBox="0 0 10 168"><path d="M3.5 5.5l1.5-1.5 1.5 1.5z" fill="#777"/><path d="M3.5 162.5l1.5 1.5 1.5-1.5z" fill="#777"/><path d="M3.5 78h3M3.5 80h3M3.5 82h3" stroke="#bbb" stroke-width="0.6"/></svg>
<!-- bottom tabs View / Data -->
<svg class="a" style="left:0;top:420px" width="140" height="21" viewBox="0 420 140 21">
<path d="M31.5 421.3L36.2 436.3Q37 438.8 39.5 438.8L51 438.8Q53.5 438.8 54.3 436.3L60 422.5" fill="#efeeec" stroke="#8f8c88" stroke-width="0.7"/>
<path d="M1.3 421.3L6.5 436.3Q7.3 438.8 9.8 438.8L23 438.8Q25.5 438.8 26.3 436.3L31.3 421.3" fill="#ffffff" stroke="#8f8c88" stroke-width="0.7"/>
</svg>
<div class="t" style="left:6.5px;top:426.5px">View</div>
<div class="t" style="left:37px;top:426.5px">Data</div>


<!-- 3D VIEW -->
<svg class="a" style="left:143px;top:51px" width="639" height="370" viewBox="143 51 639 370">
<defs>
<linearGradient id="bg" x1="0" y1="0" x2="0" y2="1">
<stop offset="0" stop-color="#333366"/>
<stop offset="1" stop-color="#9999aa"/>
</linearGradient>
</defs>
<rect x="143" y="51" width="639" height="370" fill="url(#bg)"/>
<path d="M409.44 398.20L150.99 229.40M404.04 397.56L685.29 292.66M412.25 397.15L153.80 228.35M401.46 395.87L682.71 290.97M415.06 396.10L156.61 227.30M398.87 394.19L680.12 289.29M417.88 395.05L159.43 226.25M396.29 392.50L677.54 287.60M420.69 394.00L162.24 225.20M393.70 390.81L674.95 285.91M423.50 392.96L165.05 224.16M391.12 389.12L672.37 284.22M426.31 391.91L167.86 223.11M388.53 387.43L669.78 282.53M429.12 390.86L170.68 222.06M385.95 385.75L667.20 280.85M431.94 389.81L173.49 221.01M383.36 384.06L664.61 279.16M437.56 387.71L179.11 218.91M378.20 380.68L659.45 275.78M440.38 386.66L181.93 217.86M375.61 378.99L656.86 274.09M443.19 385.61L184.74 216.81M373.03 377.31L654.28 272.41M446.00 384.56L187.55 215.76M370.44 375.62L651.69 270.72M448.81 383.51L190.36 214.71M367.86 373.93L649.11 269.03M451.62 382.47L193.18 213.67M365.27 372.24L646.52 267.34M454.44 381.42L195.99 212.62M362.69 370.55L643.94 265.65M457.25 380.37L198.80 211.57M360.10 368.87L641.35 263.97M460.06 379.32L201.61 210.52M357.52 367.18L638.77 262.28M465.69 377.22L207.24 208.42M352.35 363.80L633.60 258.90M468.50 376.17L210.05 207.37M349.77 362.11L631.02 257.21M471.31 375.12L212.86 206.32M347.18 360.43L628.43 255.53M474.12 374.07L215.68 205.27M344.60 358.74L625.85 253.84M476.94 373.02L218.49 204.22M342.01 357.05L623.26 252.15M479.75 371.98L221.30 203.18M339.43 355.36L620.68 250.46M482.56 370.93L224.11 202.13M336.84 353.67L618.09 248.77M485.38 369.88L226.93 201.08M334.26 351.99L615.51 247.09M488.19 368.83L229.74 200.03M331.67 350.30L612.92 245.40M493.81 366.73L235.36 197.93M326.51 346.92L607.76 242.02M496.62 365.68L238.18 196.88M323.92 345.23L605.17 240.33M499.44 364.63L240.99 195.83M321.34 343.55L602.59 238.65M502.25 363.58L243.80 194.78M318.75 341.86L600.00 236.96M505.06 362.53L246.61 193.73M316.17 340.17L597.42 235.27M507.88 361.49L249.43 192.69M313.58 338.48L594.83 233.58M510.69 360.44L252.24 191.64M311.00 336.79L592.25 231.89M513.50 359.39L255.05 190.59M308.41 335.11L589.66 230.21M516.31 358.34L257.86 189.54M305.83 333.42L587.08 228.52M521.94 356.24L263.49 187.44M300.66 330.04L581.91 225.14M524.75 355.19L266.30 186.39M298.08 328.35L579.33 223.45M527.56 354.14L269.11 185.34M295.49 326.67L576.74 221.77M530.38 353.09L271.93 184.29M292.91 324.98L574.16 220.08M533.19 352.04L274.74 183.24M290.32 323.29L571.57 218.39M536.00 351.00L277.55 182.20M287.74 321.60L568.99 216.70M538.81 349.95L280.36 181.15M285.15 319.91L566.40 215.01M541.62 348.90L283.18 180.10M282.57 318.23L563.82 213.33M544.44 347.85L285.99 179.05M279.98 316.54L561.23 211.64M550.06 345.75L291.61 176.95M274.82 313.16L556.07 208.26M552.88 344.70L294.43 175.90M272.23 311.47L553.48 206.57M555.69 343.65L297.24 174.85M269.65 309.79L550.90 204.89M558.50 342.60L300.05 173.80M267.06 308.10L548.31 203.20M561.31 341.55L302.86 172.75M264.48 306.41L545.73 201.51M564.12 340.51L305.68 171.71M261.89 304.72L543.14 199.82M566.94 339.46L308.49 170.66M259.31 303.03L540.56 198.13M569.75 338.41L311.30 169.61M256.72 301.35L537.97 196.45M572.56 337.36L314.11 168.56M254.14 299.66L535.39 194.76M578.19 335.26L319.74 166.46M248.97 296.28L530.22 191.38M581.00 334.21L322.55 165.41M246.39 294.59L527.64 189.69M583.81 333.16L325.36 164.36M243.80 292.91L525.05 188.01M586.62 332.11L328.18 163.31M241.22 291.22L522.47 186.32M589.44 331.06L330.99 162.26M238.63 289.53L519.88 184.63M592.25 330.02L333.80 161.22M236.05 287.84L517.30 182.94M595.06 328.97L336.61 160.17M233.46 286.15L514.71 181.25M597.88 327.92L339.43 159.12M230.88 284.47L512.13 179.57M600.69 326.87L342.24 158.07M228.29 282.78L509.54 177.88M606.31 324.77L347.86 155.97M223.13 279.40L504.38 174.50M609.12 323.72L350.68 154.92M220.54 277.71L501.79 172.81M611.94 322.67L353.49 153.87M217.96 276.03L499.21 171.13M614.75 321.62L356.30 152.82M215.37 274.34L496.62 169.44M617.56 320.57L359.11 151.77M212.79 272.65L494.04 167.75M620.38 319.53L361.93 150.73M210.20 270.96L491.45 166.06M623.19 318.48L364.74 149.68M207.62 269.27L488.87 164.37M626.00 317.43L367.55 148.63M205.03 267.59L486.28 162.69M628.81 316.38L370.36 147.58M202.45 265.90L483.70 161.00M634.44 314.28L375.99 145.48M197.28 262.52L478.53 157.62M637.25 313.23L378.80 144.43M194.70 260.83L475.95 155.93M640.06 312.18L381.61 143.38M192.11 259.15L473.36 154.25M642.88 311.13L384.43 142.33M189.53 257.46L470.78 152.56M645.69 310.08L387.24 141.28M186.94 255.77L468.19 150.87M648.50 309.04L390.05 140.24M184.36 254.08L465.61 149.18M651.31 307.99L392.86 139.19M181.77 252.39L463.02 147.49M654.13 306.94L395.68 138.14M179.19 250.71L460.44 145.81M656.94 305.89L398.49 137.09M176.60 249.02L457.85 144.12M662.56 303.79L404.11 134.99M171.44 245.64L452.69 140.74M665.38 302.74L406.93 133.94M168.85 243.95L450.10 139.05M668.19 301.69L409.74 132.89M166.27 242.27L447.52 137.37M671.00 300.64L412.55 131.84M163.68 240.58L444.93 135.68M673.81 299.59L415.36 130.79M161.10 238.89L442.35 133.99M676.63 298.55L418.18 129.75M158.51 237.20L439.76 132.30M679.44 297.50L420.99 128.70M155.93 235.51L437.18 130.61M682.25 296.45L423.80 127.65M153.34 233.83L434.59 128.93M685.06 295.40L426.61 126.60M150.76 232.14L432.01 127.24" stroke="#202030" stroke-opacity="0.22" stroke-width="0.6" fill="none"/>
<path d="M406.62 399.25L148.18 230.45M406.62 399.25L687.88 294.35M434.75 388.76L176.30 219.96M380.78 382.37L662.03 277.47M462.88 378.27L204.43 209.47M354.94 365.49L636.19 260.59M491.00 367.78L232.55 198.98M329.09 348.61L610.34 243.71M519.12 357.29L260.68 188.49M303.25 331.73L584.50 226.83M547.25 346.80L288.80 178.00M277.40 314.85L558.65 209.95M575.38 336.31L316.93 167.51M251.56 297.97L532.81 193.07M603.50 325.82L345.05 157.02M225.71 281.09L506.96 176.19M631.62 315.33L373.18 146.53M199.87 264.21L481.12 159.31M659.75 304.84L401.30 136.04M174.02 247.33L455.27 142.43M687.88 294.35L429.43 125.55M148.18 230.45L429.43 125.55" stroke="#1c1c40" stroke-opacity="0.32" stroke-width="1.35" fill="none"/>
<path d="M427.72 318.41L433.34 316.32L404.58 298.27L400.40 299.83zM397.03 291.52L395.74 291.09L394.34 290.83L392.92 290.76L391.58 290.88L390.43 291.18L389.54 291.64L388.97 292.21L388.74 292.85L388.86 293.52L389.32 294.22L390.13 294.88L391.21 295.45L392.50 295.88L393.91 296.14L395.33 296.22L396.66 296.10L397.82 295.79L398.71 295.34L399.28 294.76L399.50 294.13L399.38 293.45L398.92 292.75L398.12 292.09zM464.20 295.40L469.67 293.36L430.51 267.79L425.04 269.83L441.74 280.73L418.16 289.53L401.46 278.62L395.98 280.66L435.15 306.24L440.62 304.20L422.33 292.25L445.91 283.46zM490.93 267.49L488.31 266.08L485.73 264.90L483.19 263.95L480.68 263.22L478.21 262.72L475.76 262.45L473.29 262.39L470.82 262.55L468.34 262.94L465.84 263.54L463.34 264.37L459.29 266.32L456.95 268.51L456.27 270.92L457.24 273.61L459.91 276.59L464.27 279.86L466.81 281.42L469.36 282.77L471.91 283.91L474.47 284.85L477.03 285.58L479.60 286.10L482.15 286.42L484.67 286.51L487.17 286.38L489.63 286.03L492.07 285.47L494.48 284.69L496.68 283.75L498.47 282.76L499.85 281.70L500.82 280.58L501.39 279.40L501.56 278.16L501.32 276.85L500.65 275.45L499.54 273.98L498.00 272.43L496.01 270.81L493.59 269.12zM489.91 272.33L491.53 273.57L492.85 274.74L493.88 275.84L494.61 276.87L495.04 277.84L495.15 278.76L494.92 279.64L494.37 280.46L493.49 281.21L492.30 281.91L490.80 282.56L489.26 283.05L487.68 283.37L486.07 283.54L484.42 283.55L482.75 283.39L481.04 283.08L479.30 282.61L477.50 281.98L475.67 281.21L473.78 280.28L471.85 279.20L469.87 277.97L467.96 276.66L466.35 275.42L465.03 274.25L464.02 273.16L463.30 272.13L462.89 271.16L462.79 270.23L463.01 269.36L463.56 268.55L464.42 267.80L465.58 267.12L467.05 266.49L468.66 265.97L470.28 265.61L471.90 265.41L473.53 265.38L475.16 265.51L476.79 265.80L478.47 266.25L480.22 266.87L482.04 267.66L483.95 268.61L485.93 269.73L487.99 271.02zM517.57 275.50L522.70 273.58L481.44 246.63L476.30 248.55zM543.67 266.30L544.77 265.77L545.72 265.21L546.52 264.63L547.18 264.02L547.68 263.39L548.04 262.73L548.26 262.01L548.33 261.22L548.25 260.38L548.02 259.47L547.59 258.35L547.98 258.21L549.13 258.86L550.19 259.38L551.23 259.83L552.24 260.19L553.22 260.46L554.17 260.65L555.11 260.75L556.07 260.76L557.04 260.69L558.01 260.54L559.00 260.29L560.00 259.96L560.70 259.69L561.38 259.40L562.02 259.09L562.63 258.78L563.21 258.45L563.56 258.23L560.70 256.36L560.51 256.47L560.24 256.62L559.97 256.76L559.70 256.89L559.43 257.01L559.15 257.12L558.54 257.31L557.93 257.44L557.32 257.51L556.71 257.50L556.10 257.43L555.49 257.29L554.87 257.09L554.24 256.84L553.57 256.54L552.88 256.18L552.17 255.77L551.43 255.31L538.38 246.78L536.71 245.78L535.00 244.93L533.25 244.23L531.45 243.68L529.61 243.28L527.73 243.02L525.81 242.92L523.86 242.98L521.89 243.20L519.89 243.57L517.86 244.10L515.82 244.79L512.41 246.30L510.04 247.87L508.72 249.50L508.41 251.17L509.10 252.94L510.76 254.76L516.62 253.04L516.16 252.63L515.64 252.06L515.28 251.50L515.06 250.96L515.01 250.42L515.12 249.90L515.40 249.41L515.86 248.93L516.50 248.46L517.30 247.99L518.27 247.53L519.43 247.07L520.64 246.66L521.84 246.35L523.03 246.14L524.19 246.02L525.33 246.01L526.46 246.10L527.58 246.29L528.73 246.60L529.90 247.02L531.09 247.55L532.29 248.19L533.52 248.94L535.42 250.18L527.86 253.13L525.60 254.09L523.71 255.05L522.18 256.01L521.01 256.97L520.21 257.91L519.76 258.84L519.64 259.77L519.82 260.70L520.29 261.66L521.07 262.64L522.16 263.64L523.56 264.65L524.97 265.50L526.42 266.23L527.91 266.85L529.44 267.35L531.00 267.74L532.61 268.01L534.23 268.15L535.86 268.16L537.50 268.03L539.13 267.76L540.77 267.35L542.42 266.81zM539.08 264.45L538.17 264.68L537.24 264.83L536.32 264.90L535.38 264.90L534.44 264.82L533.51 264.67L532.59 264.45L531.70 264.16L530.82 263.79L529.96 263.36L529.12 262.85L528.41 262.36L527.81 261.87L527.31 261.39L526.91 260.91L526.63 260.44L526.45 259.97L526.38 259.50L526.41 259.04L526.54 258.59L526.76 258.16L527.08 257.73L527.49 257.32L528.01 256.91L528.67 256.48L529.47 256.04L530.40 255.59L531.47 255.12L532.68 254.63L538.64 252.29L541.20 253.96L541.94 254.48L542.60 255.03L543.18 255.61L543.68 256.21L544.09 256.83L544.42 257.49L544.66 258.15L544.78 258.80L544.80 259.44L544.70 260.06L544.49 260.67L544.17 261.27L543.74 261.84L543.20 262.37L542.56 262.87L541.81 263.33L540.95 263.76L539.99 264.15zM571.17 251.90L569.88 251.47L568.47 251.21L567.05 251.14L565.72 251.26L564.56 251.56L563.67 252.02L563.10 252.59L562.88 253.22L562.99 253.90L563.46 254.60L564.26 255.26L565.35 255.83L566.64 256.26L568.04 256.52L569.46 256.60L570.79 256.47L571.95 256.17L572.84 255.71L573.41 255.14L573.64 254.51L573.52 253.83L573.05 253.13L572.25 252.47zM534.66 228.94L529.04 231.04L557.80 249.08L561.97 247.53z" fill="#747474" stroke="#050505" stroke-width="1" fill-rule="evenodd" stroke-linejoin="round"/>
<polygon points="296.7,184.8 462.4,122.8 502.2,230.7 336.1,292.3" fill="#ababab" stroke="#0a0a0a" stroke-width="1.45" stroke-linejoin="round"/>
<!-- triad -->
<g stroke-width="1.4" stroke-linecap="round">
<line x1="762.9" y1="402.5" x2="770.8" y2="399.2" stroke="#c02828"/>
<line x1="762.9" y1="402.5" x2="755.8" y2="397.6" stroke="#20a020"/>
<line x1="762.9" y1="402.5" x2="764.6" y2="390.1" stroke="#2828b8"/>
</g>
<g font-family="Liberation Sans" font-size="6" fill="#2a2a2a"><text x="765.6" y="390.6">Z</text><text x="771.9" y="400">X</text><text x="757.2" y="397.7">Y</text></g>
</svg>

<!-- RIGHT TOOLBAR -->
<svg class="a" style="left:781px;top:51px" width="19" height="240" viewBox="781 51 19 240">
<defs><linearGradient id="rb" x1="0" y1="0" x2="0" y2="1"><stop offset="0" stop-color="#fbfbfa"/><stop offset="1" stop-color="#e9e8e6"/></linearGradient><linearGradient id="gr" x1="0" y1="0" x2="0" y2="1"><stop offset="0" stop-color="#3cb88a"/><stop offset="1" stop-color="#137a58"/></linearGradient></defs>
<rect x="787" y="54.5" width="1" height="1" fill="#cfccc8"/><rect x="789.5" y="54.5" width="1" height="1" fill="#cfccc8"/><rect x="792" y="54.5" width="1" height="1" fill="#cfccc8"/>
<rect x="783.7" y="59.80" width="14" height="13" rx="2.5" fill="url(#rb)" stroke="#cfccc7" stroke-width="0.8"/>
<path d="M788 65.5v-2a2.5 2.5 0 0 1 5 0v2" fill="none" stroke="#4aa888" stroke-width="1.2"/><rect x="786.8" y="65.3" width="7.4" height="5.2" rx="0.6" fill="url(#gr)" stroke="#0f5a40" stroke-width="0.4"/>
<rect x="783.7" y="75.78" width="14" height="13" rx="2.5" fill="url(#rb)" stroke="#cfccc7" stroke-width="0.8"/>
<path d="M786.5 86l8-7.5" stroke="#0f5a40" stroke-width="2.6" fill="none"/><path d="M786.5 86l8-7.5" stroke="#1f9e6e" stroke-width="1.4" fill="none"/><path d="M790.5 79.3l3 3-3 3-3-3z" fill="#1f9e6e" stroke="#0f5a40" stroke-width="0.5"/>
<rect x="783.7" y="91.76" width="14" height="13" rx="2.5" fill="url(#rb)" stroke="#cfccc7" stroke-width="0.8"/>
<path d="M790.5 94v8.5M786 102h9" stroke="#0f5a40" stroke-width="2.8" fill="none"/><path d="M790.5 94v8.5M786 102h9" stroke="#1f9e6e" stroke-width="1.6" fill="none"/>
<rect x="783.7" y="107.74" width="14" height="13" rx="2.5" fill="url(#rb)" stroke="#cfccc7" stroke-width="0.8"/>
<path d="M787 110l7 7M794 110l-7 7" stroke="#0f5a40" stroke-width="3.8" fill="none"/><path d="M787 110l7 7M794 110l-7 7" stroke="#1f9e6e" stroke-width="2.6" fill="none"/><rect x="789.3" y="112.3" width="2.4" height="2.4" fill="#f0f0ee"/>
<rect x="783.7" y="123.72" width="14" height="13" rx="2.5" fill="url(#rb)" stroke="#cfccc7" stroke-width="0.8"/>
<path d="M787 126l7 7M794 126l-7 7" stroke="#0f5a40" stroke-width="3.2" fill="none"/><path d="M787 126l7 7M794 126l-7 7" stroke="#1f9e6e" stroke-width="2" fill="none"/>
<rect x="783.7" y="139.70" width="14" height="13" rx="2.5" fill="url(#rb)" stroke="#cfccc7" stroke-width="0.8"/>
<path d="M786.5 144.5l8-4.5M786.5 148.5l8-4.5" stroke="#0f5a40" stroke-width="2.7" fill="none"/><path d="M786.5 144.5l8-4.5M786.5 148.5l8-4.5" stroke="#1f9e6e" stroke-width="1.5" fill="none"/>
<rect x="783.7" y="155.68" width="14" height="13" rx="2.5" fill="url(#rb)" stroke="#cfccc7" stroke-width="0.8"/>
<path d="M788.5 164.5l5.5-5.5" stroke="#0f5a40" stroke-width="2.6" fill="none"/><path d="M788.5 164.5l5.5-5.5" stroke="#1f9e6e" stroke-width="1.4" fill="none"/><circle cx="788.2" cy="164.8" r="1.9" fill="#1f9e6e" stroke="#0f5a40" stroke-width="0.5"/>
<rect x="783.7" y="171.66" width="14" height="13" rx="2.5" fill="url(#rb)" stroke="#cfccc7" stroke-width="0.8"/>
<circle cx="790.5" cy="178.5" r="2.6" fill="none" stroke="#17855c" stroke-width="1.8"/><path d="M790.5 174v2M790.5 181v2M786 178.5h2M793 178.5h2" stroke="#0f5a40" stroke-width="2.4" fill="none"/><path d="M790.5 174v2M790.5 181v2M786 178.5h2M793 178.5h2" stroke="#1f9e6e" stroke-width="1.2" fill="none"/>
<rect x="783.7" y="187.64" width="14" height="13" rx="2.5" fill="url(#rb)" stroke="#cfccc7" stroke-width="0.8"/>
<circle cx="790.5" cy="194.5" r="3.3" fill="none" stroke="#0f5a40" stroke-width="2.4"/><circle cx="790.5" cy="194.5" r="3.3" fill="none" stroke="#1f9e6e" stroke-width="1.4"/><circle cx="790.5" cy="194.5" r="1" fill="#17855c"/>
<rect x="783.7" y="203.62" width="14" height="13" rx="2.5" fill="url(#rb)" stroke="#cfccc7" stroke-width="0.8"/>
<circle cx="787.3" cy="210.8" r="1.2" fill="#17855c"/><circle cx="790.5" cy="210.8" r="1.2" fill="#17855c"/><circle cx="793.7" cy="210.8" r="1.2" fill="#17855c"/>
<rect x="783.7" y="219.60" width="14" height="13" rx="2.5" fill="url(#rb)" stroke="#cfccc7" stroke-width="0.8"/>
<path d="M787 224.5l6 3.8" stroke="#0f5a40" stroke-width="2.6" fill="none"/><path d="M787 224.5l6 3.8" stroke="#1f9e6e" stroke-width="1.4" fill="none"/><circle cx="793.5" cy="223" r="1.2" fill="#17855c"/>
<rect x="783.7" y="235.58" width="14" height="13" rx="2.5" fill="url(#rb)" stroke="#cfccc7" stroke-width="0.8"/>
<path d="M790.5 238.8v7.5M786.8 242.5h7.5" stroke="#0f5a40" stroke-width="2.8" fill="none"/><path d="M790.5 238.8v7.5M786.8 242.5h7.5" stroke="#1f9e6e" stroke-width="1.6" fill="none"/>
<rect x="783.7" y="251.56" width="14" height="13" rx="2.5" fill="url(#rb)" stroke="#cfccc7" stroke-width="0.8"/>
<path d="M787.5 262.5l3-3 .5-2.5 2.5 1 1 2-2 3-2.5-.5z" fill="#8fd0b0" stroke="#17855c" stroke-width="1.3"/><path d="M788 262.5l1.5-1.5" stroke="#17855c" stroke-width="1"/>
<rect x="783.7" y="267.54" width="14" height="13" rx="2.5" fill="url(#rb)" stroke="#cfccc7" stroke-width="0.8"/>
<rect x="786.5" y="270" width="8" height="8" fill="url(#gr)" stroke="#0e5a40" stroke-width="0.6"/><rect x="788" y="273" width="1.6" height="1.6" fill="#0e5a40"/>
</svg>

<!-- TAB BAR -->
<div class="a" style="left:143px;top:421px;width:132.5px;height:20px;border:1px solid #d9d6d1;border-top:none;border-radius:0 0 2px 2px;background:#f6f5f4"></div>
<div class="a" style="left:145.5px;top:424px;width:127.5px;height:15px;border:1px solid #f1b08e;border-radius:2px;background:#fbe9e1"></div>
<svg class="a" style="left:147px;top:425px" width="12" height="12" viewBox="147 425 12 12">
<path d="M148 426.5h4.5v2.2h-2.3v2h1.8v1.8h-1.8v3h-2.2z" fill="#e8401a"/>
<circle cx="153.5" cy="432" r="2.5" fill="#2a3898"/><circle cx="153.5" cy="432" r="0.9" fill="#fbe9e1"/>
<path d="M153.5 428.6v1.2M153.5 434.2v1.2M150.1 432h1.2M155.7 432h1.2M151.1 429.6l.8.8M155.9 429.6l-.8.8M151.1 434.4l.8-.8M155.9 434.4l-.8-.8" stroke="#2a3898" stroke-width="1.1"/>
</svg>
<div class="t" style="left:162px;top:427.6px;color:#4a4a4a">F2-T18-ejemplo-ini : 1*</div>
<svg class="a" style="left:259px;top:427px" width="11" height="10" viewBox="259 427 11 10"><path d="M261.5 429.5l5.5 5.5M267 429.5l-5.5 5.5" stroke="#555" stroke-width="2.1" stroke-linecap="round"/></svg>


<!-- STATUS -->
<div class="a" style="left:0;top:441px;width:800px;height:1px;background:#dcdad5"></div>
<div class="t" style="left:723px;top:447.8px;font-size:8.85px;color:#3c3c3c">165.87 x 96.04 mm</div>
</body></html>
